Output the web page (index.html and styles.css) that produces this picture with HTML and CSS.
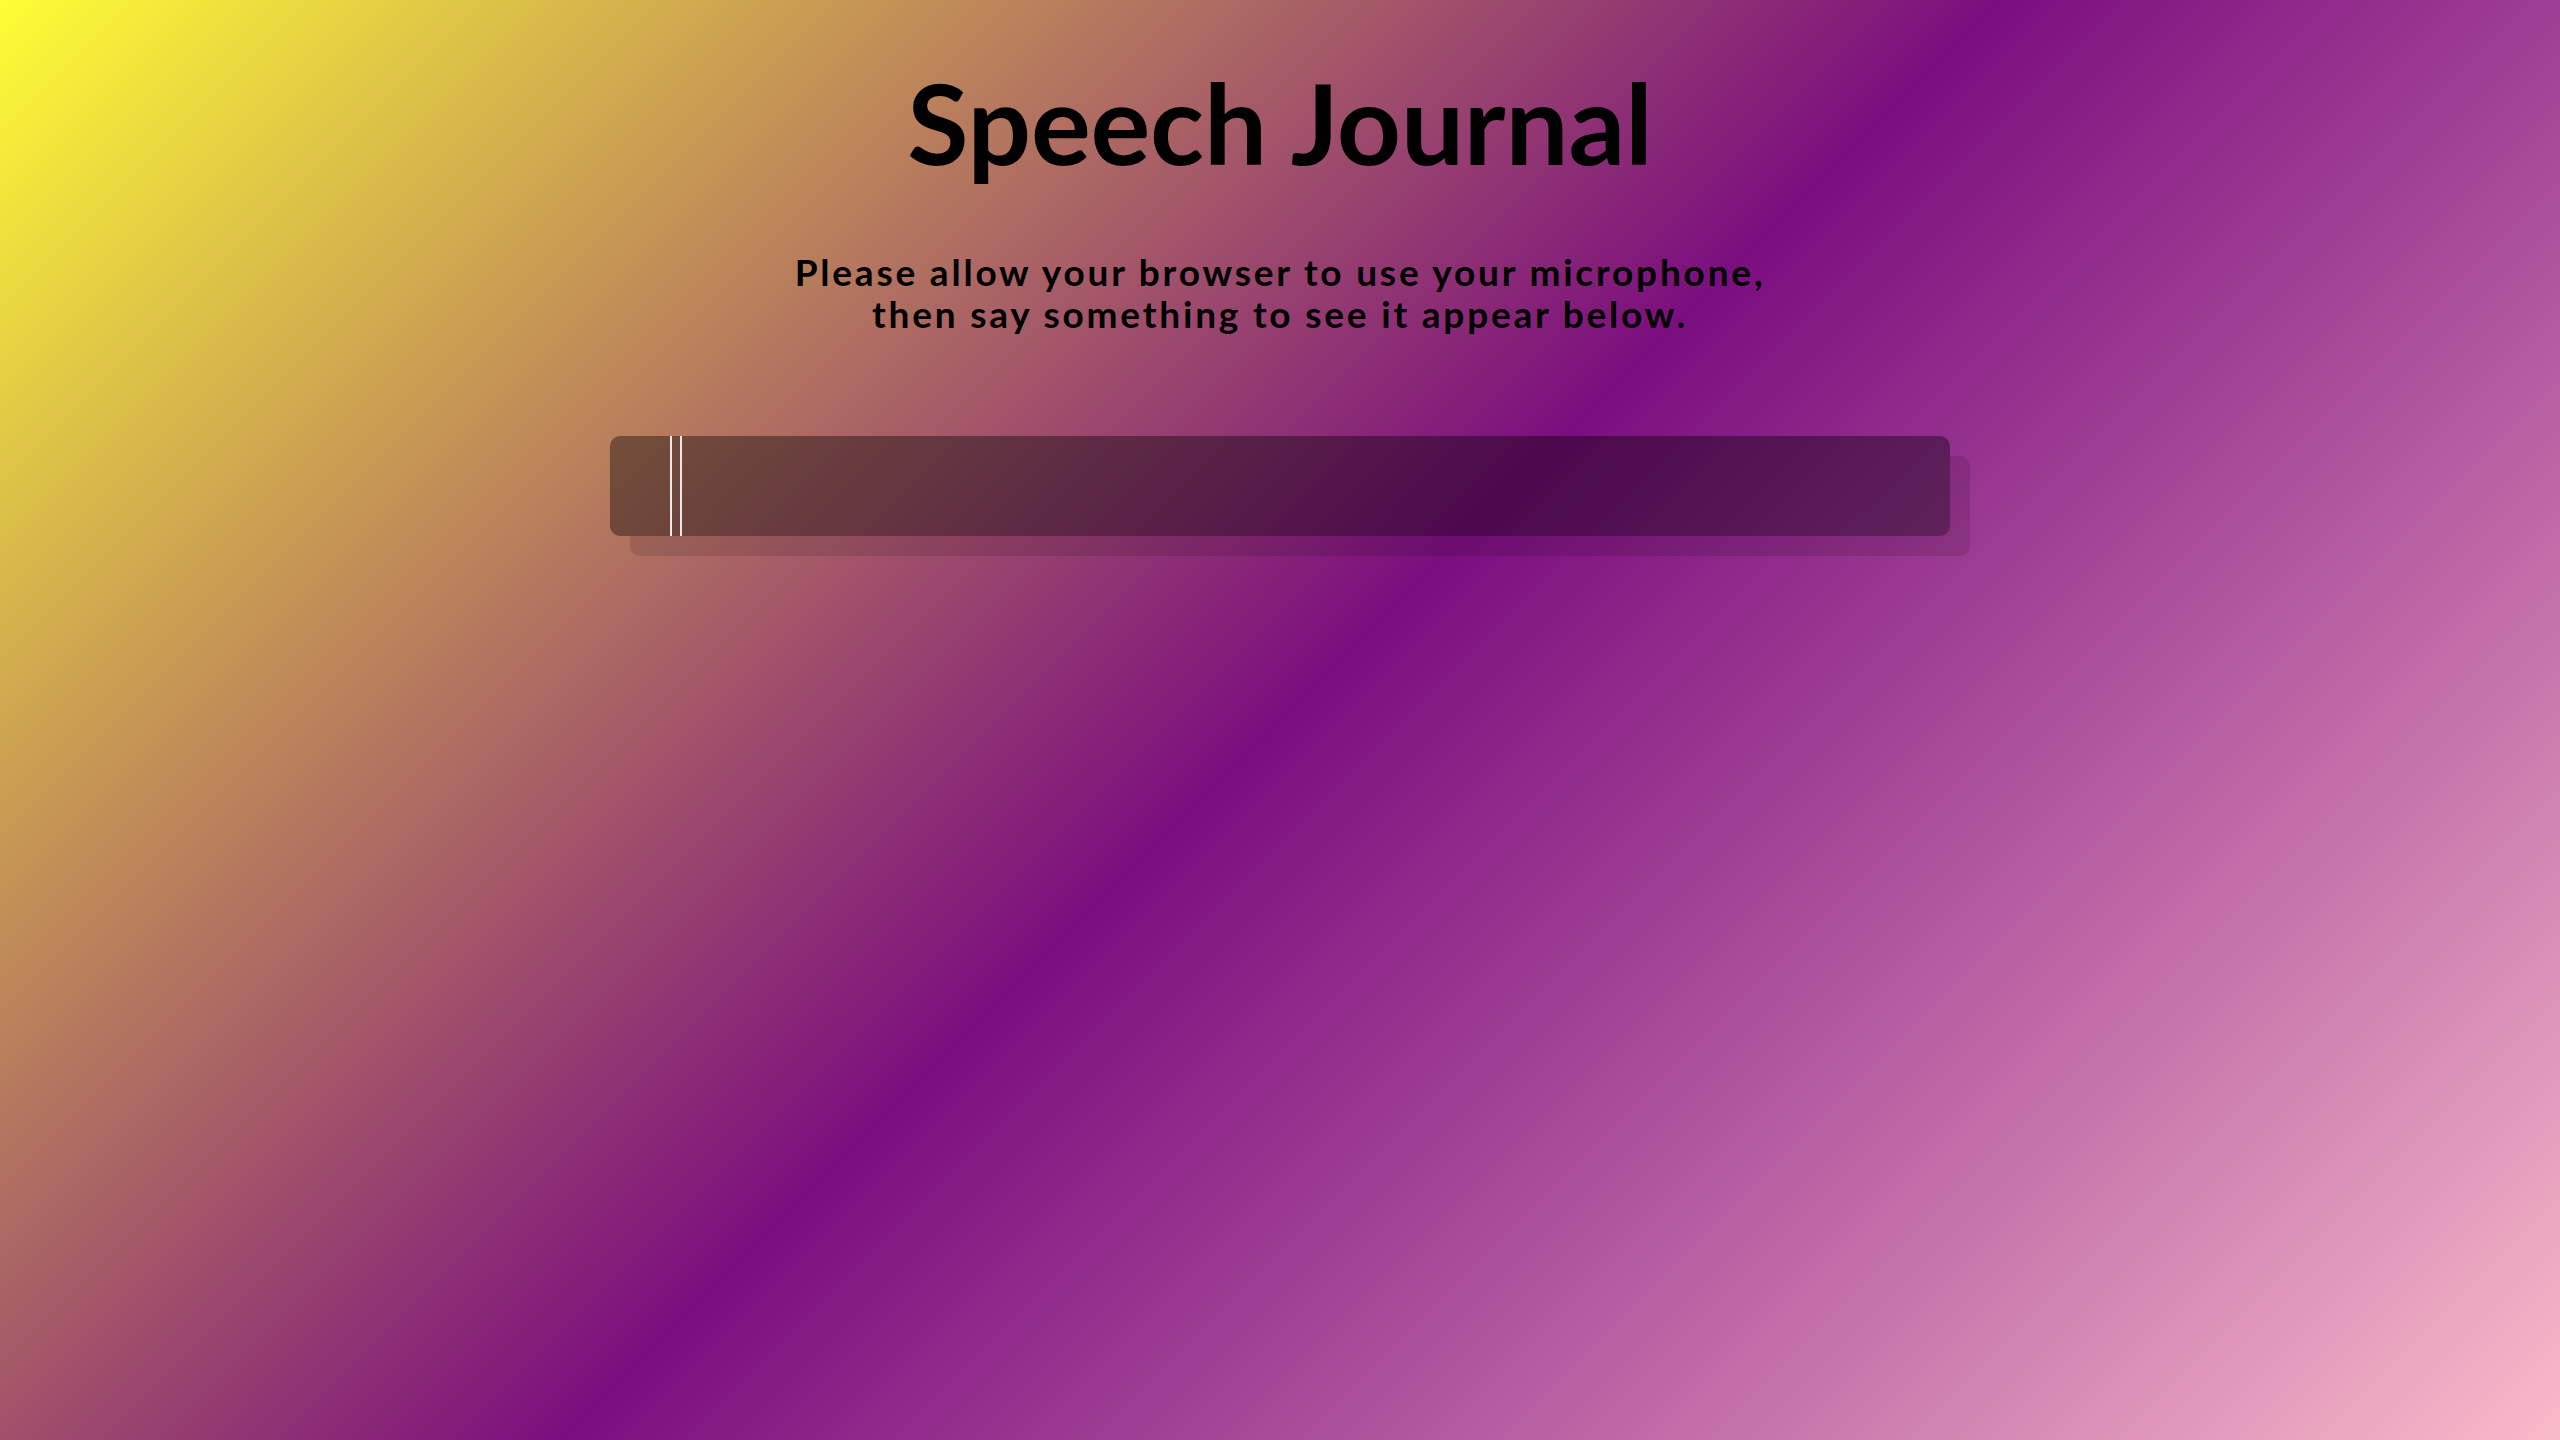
FILE: index.html
```html
<!DOCTYPE html>
<html lang="en">
<head>
<meta charset="utf-8">
<title>Speech Journal</title>
<link rel="stylesheet" href="styles.css">
</head>
<body>
  <main class="page">
    <h1 class="title">Speech Journal</h1>
    <p class="intro">Please allow your browser to use your microphone,<br>then say something to see it appear below.</p>
    <div class="journal">
      <span class="bar"></span>
      <span class="bar"></span>
    </div>
  </main>
</body>
</html>
```

FILE: styles.css
```css
html, body {
  margin: 0;
  padding: 0;
  height: 100%;
}

body {
  background: linear-gradient(135deg, #fefd34 0%, #7b0e7f 50%, #f9bac9 100%);
  font-family: "Lato", "Open Sans", sans-serif;
  color: #000;
}

.page {
  min-height: 100vh;
  display: flex;
  flex-direction: column;
  align-items: center;
  padding-top: 55px;
  box-sizing: border-box;
}

.title {
  margin: 0;
  font-size: 112px;
  line-height: 1.2;
  font-weight: 700;
  letter-spacing: -0.2px;
}

.intro {
  margin: 62px 0 0;
  font-size: 37px;
  line-height: 42px;
  font-weight: 700;
  letter-spacing: 2.8px;
  text-align: center;
}

.journal {
  margin-top: 101px;
  width: 1340px;
  height: 100px;
  border-radius: 10px;
  background: rgba(0, 0, 0, 0.38);
  box-shadow: 20px 20px 0 rgba(0, 0, 0, 0.12);
  display: flex;
  gap: 8px;
  padding-left: 60px;
  box-sizing: border-box;
}

.bar {
  width: 2px;
  height: 100%;
  background: #f2e6e6;
}
```
